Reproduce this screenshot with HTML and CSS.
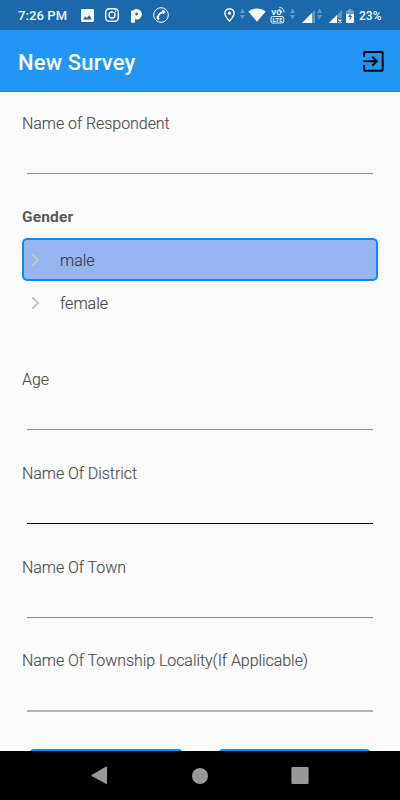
FILE: index.html
```html
<!DOCTYPE html>
<html lang="en">
<head>
<meta charset="utf-8">
<title>New Survey</title>
<link rel="stylesheet" href="styles.css">
</head>
<body>
<div class="screen">
  <div class="status">
    <span class="time">7:26 PM</span>
    <svg class="picture" width="13" height="13" viewBox="0 0 13 13"><path fill="#fff" fill-rule="evenodd" d="M1.4 0h10.2Q13 0 13 1.4v10.2q0 1.4-1.4 1.4H1.4Q0 13 0 11.6V1.4Q0 0 1.4 0zM2 10.5h9L8.2 6.3 5.9 9.1 4.3 7.3z"/></svg>
    <svg class="camera" width="14" height="14" viewBox="0 0 14 14" fill="none" stroke="#fff"><rect x=".7" y=".7" width="12.6" height="12.6" rx="3.6" stroke-width="1.4"/><circle cx="7" cy="7" r="3" stroke-width="1.4"/><circle cx="10.6" cy="3.4" r=".8" fill="#fff" stroke="none"/></svg>
    <svg class="p-logo" width="11" height="14" viewBox="0 0 11 14"><circle cx="5.7" cy="5.2" r="5.2" fill="#fff"/><rect y="1.5" width="4" height="12.2" rx="1" fill="#fff"/><circle cx="5.6" cy="5" r="1.4" fill="#1b69ab"/></svg>
    <svg class="call" width="16" height="16" viewBox="0 0 16 16" fill="none" stroke="#fff"><circle cx="8" cy="8" r="7.3" stroke-width="1"/><path d="M5 10.6Q5.4 5.8 10.4 5.1" stroke-width="1.6"/><path d="M4.1 9.1l2.2 2.2-.7 1.4-1.5-.6zM9 3.6l2.7.5.3 1.5-2 1.2z" fill="#fff" stroke-width=".7"/></svg>
    <span class="spacer"></span>
    <svg class="pin" width="11" height="14" viewBox="0 0 11 14"><path d="M5.5.8C2.8.8.9 2.8.9 5.3c0 3 4.6 7.8 4.6 7.8s4.6-4.8 4.6-7.8C10.1 2.8 8.2.8 5.5.8z" fill="none" stroke="#fff" stroke-width="1.4"/><circle cx="5.5" cy="5.2" r="1.6" fill="#fff"/></svg>
    <svg class="data first" width="5" height="12" viewBox="0 0 5 12"><path d="M0 5L2.5.5 5 5zM0 7h5l-2.5 4.5z"/></svg>
    <svg class="wifi" width="18" height="14" viewBox="0 0 18 14"><path fill="#fff" d="M.3 3.5Q4 .4 9 .4t8.7 3.1L9 13.7z"/></svg>
    <svg class="volte" width="16" height="18" viewBox="0 0 16 18"><text x="1.3" y="9.1">VO</text><path d="M8.6 3.4q2.7-.1 3.4 3.3M9.4 1.4q4.2.1 4.7 5" fill="none" stroke="#fff" stroke-width=".9"/><rect x="1" y="10.5" width="12.8" height="6.5" rx="1.8" fill="none" stroke="#fff" stroke-width=".9"/><text class="lte" x="2.8" y="15.9">LTE</text></svg>
    <svg class="data second" width="5" height="12" viewBox="0 0 5 12"><path d="M0 5L2.5.5 5 5zM0 7h5l-2.5 4.5z"/></svg>
    <svg class="signal" width="13" height="13" viewBox="0 0 13 13"><path fill="#5d97c6" d="M0 13L13 0v13z"/><path fill="#fff" d="M0 13L10 3v10z"/></svg>
    <svg class="data third" width="5" height="12" viewBox="0 0 5 12"><path d="M0 5L2.5.5 5 5zM0 7h5l-2.5 4.5z"/></svg>
    <svg class="signal weak" width="13" height="13" viewBox="0 0 13 13"><path fill="#5d97c6" d="M0 13L13 0v8H8v5z"/><path fill="#fff" d="M0 13l8-8v8z"/><path d="M9.3 9.5l3.2 3.2m0-3.2L9.3 12.7" stroke="#fff" stroke-width="1.1"/></svg>
    <svg class="battery" width="8" height="14" viewBox="0 0 8 14"><path fill="#6ca2cc" d="M2.5 0h3v1.4H8V8H0V1.4h2.5z"/><path fill="#fff" d="M0 5h8v8.3q0 .7-.7.7H.7Q0 14 0 13.3z"/><path fill="#1b69ab" d="M4.7 4L2.2 8.1h1.6v3.2l2.3-4.3H4.7z"/></svg>
    <span class="percent">23%</span>
  </div>
  <header class="bar">
    <h1>New Survey</h1>
    <svg width="21" height="21" viewBox="0 0 21 21" fill="none" stroke="#080c10"><path d="M1.1 6V2.1q0-1 1-1h16.6q1 0 1 1v16.6q0 1-1 1H2.1q-1 0-1-1V14" stroke-width="2"/><path d="M.2 10.3h13M9.2 5.8l4.7 4.5-4.7 4.5" stroke-width="2.1"/></svg>
  </header>
  <main class="form">
    <div class="field"><label>Name of Respondent</label><div class="line"></div></div>
    <div class="gender">
      <div class="heading">Gender</div>
      <div class="option selected"><svg width="9" height="14" viewBox="0 0 9 14"><path d="M1.2 1.2L7 7l-5.8 5.8"/></svg><span>male</span></div>
      <div class="option"><svg width="9" height="14" viewBox="0 0 9 14"><path d="M1.2 1.2L7 7l-5.8 5.8"/></svg><span>female</span></div>
    </div>
    <div class="field"><label>Age</label><div class="line"></div></div>
    <div class="field"><label>Name Of District</label><div class="line active"></div></div>
    <div class="field"><label>Name Of Town</label><div class="line"></div></div>
    <div class="field"><label>Name Of Township Locality(If Applicable)</label><div class="line last"></div></div>
    <div class="buttons"><div class="button"></div><div class="button"></div></div>
  </main>
  <nav class="nav">
    <svg width="17" height="19" viewBox="0 0 17 19"><path d="M.6 9.1L14.8.8q1.2-.6 1.2.6v15.8q0 1.2-1.2.6L.6 9.9q-.6-.4 0-.8z"/></svg>
    <svg width="16" height="16" viewBox="0 0 16 16"><circle cx="8" cy="8" r="8"/></svg>
    <svg width="18" height="17" viewBox="0 0 18 17"><rect x=".4" width="17.2" height="17" rx="1"/></svg>
  </nav>
</div>
</body>
</html>
```
FILE: styles.css
```css
* { box-sizing: border-box; }
body { margin: 0; font-family: Roboto, sans-serif; }
svg { display: block; flex: none; }
.screen { width: 400px; height: 800px; display: flex; flex-direction: column; overflow: hidden; background: #fbfbfb; }
.status { height: 30px; flex: none; display: flex; align-items: center; padding: 0 18px; background: #1b69ab; color: #eef5fb; font-size: 13px; font-weight: 500; line-height: 30px; white-space: nowrap; }
.time { width: 63px; padding-top: 1px; letter-spacing: .1px; }
.picture { margin-top: 1px; }
.camera { margin-left: 11px; }
.p-logo { margin: 1px 0 0 12px; }
.call { margin-left: 11px; }
.spacer { flex: 1; }
.data { fill: #6098c2; margin-top: -3px; }
.first { margin-left: 5px; }
.second { margin-left: 4px; }
.third { margin-left: 2px; }
.wifi { margin-left: 3px; }
.volte { margin-left: 4px; }
.volte text { font: 700 7.5px Roboto, sans-serif; fill: #fff; }
.volte .lte { font-size: 5.5px; letter-spacing: .3px; }
.signal { margin: 3px 0 0 7px; }
.battery { margin: 1px 0 0 4px; }
.percent { width: 23px; margin-left: 5px; font-size: 12px; padding-top: 1px; }
.bar { height: 62px; flex: none; display: flex; align-items: center; justify-content: space-between; padding: 0 16px 0 18px; background: #2196f3; border-bottom: 1px solid #1489ee; }
.bar svg { margin-top: 2px; }
.bar h1 { margin: 4px 0 0; color: #fff; font-size: 22px; line-height: 26px; font-weight: 500; letter-spacing: .15px; }
.form { height: 659px; overflow: hidden; padding: 22px 22px 0; color: #484848; }
.field { height: 93.8px; }
.field label { display: block; font-size: 16px; line-height: 20px; font-weight: 300; letter-spacing: -.06px; -webkit-text-stroke: .15px #5c5c5c; }
.line { height: 1px; margin: 39px 5px 0; background: #8f8f8f; }
.line.active { background: #000; }
.line.last { height: 2px; background: #b4b4b4; }
.gender { height: 163.2px; margin-top: -1px; }
.heading { font-size: 15.5px; line-height: 20px; font-weight: 700; letter-spacing: .15px; color: #5b5b5b; }
.option { height: 43px; display: flex; align-items: center; gap: 20px; padding: 2px 0 0 7px; border: 2px solid transparent; border-radius: 5px; font-size: 16px; font-weight: 300; color: #444; -webkit-text-stroke: .15px #505050; }
.option path { fill: none; stroke: #c4c4c4; stroke-width: 2; }
.selected { margin-top: 11px; border-color: #058cf5; background: #95b5f1; color: #2b3348; }
.buttons { display: flex; gap: 35px; padding: 4px 7px 0; }
.button { width: 154px; height: 40px; border: 2px solid #058cf5; border-radius: 5px; background: #2196f3; }
.nav { height: 49px; flex: none; display: flex; align-items: center; justify-content: center; gap: 83.5px; background: #000; fill: #999; }
```
